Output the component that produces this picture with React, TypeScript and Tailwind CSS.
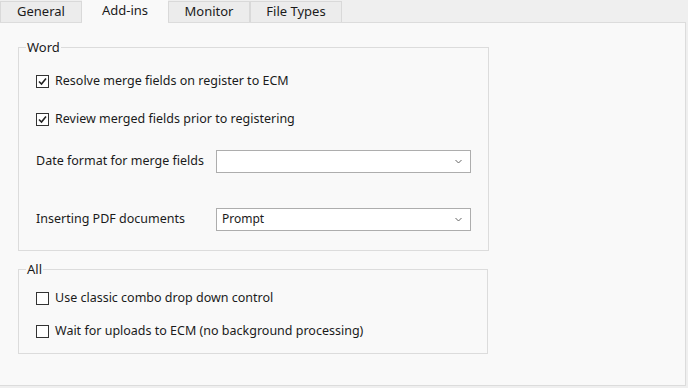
const font = { fontFamily: '"Noto Sans", "Open Sans", sans-serif' };

function Check({ checked, label }: { checked: boolean; label: string }) {
  return (
    <label className="flex items-center gap-[6px] text-[12.5px] text-[#1b1b1b]">
      <span className="flex h-[13px] w-[13px] items-center justify-center border border-[#333] bg-white">
        {checked && (
          <svg width="11" height="11" viewBox="0 0 11 11">
            <path d="M2 5.5 L4.5 8 L9 2.5" fill="none" stroke="#222" strokeWidth="1.6" />
          </svg>
        )}
      </span>
      <span>{label}</span>
    </label>
  );
}

function Combo({ value }: { value?: string }) {
  return (
    <div className="flex h-[23px] w-[255px] items-center justify-between border border-[#adadad] bg-white pl-[5px] pr-[8px] text-[12px] text-[#1b1b1b]">
      <span>{value}</span>
      <svg width="7" height="5" viewBox="0 0 7 5">
        <path d="M0.5 1 L3.5 4 L6.5 1" fill="none" stroke="#666" strokeWidth="1" />
      </svg>
    </div>
  );
}

function Group({ title, children, className }: { title: string; children: React.ReactNode; className: string }) {
  return (
    <fieldset className={`w-[470px] border border-[#dcdcdc] px-[17px] ${className}`}>
      <legend className="ml-[-10px] px-[1px] text-[13px] leading-[14px] text-[#1b1b1b]">{title}</legend>
      {children}
    </fieldset>
  );
}

const tabs = ["General", "Add-ins", "Monitor", "File Types"];

export default function App() {
  return (
    <div className="flex h-[388px] w-[688px] flex-col bg-[#efefef]" style={font}>
      <div className="flex h-[22px] items-end">
        {tabs.map((t, i) =>
          i === 1 ? (
            <div key={t} className="z-10 mb-[-1px] flex h-[23px] w-[86px] items-start justify-center bg-[#f9f9f9] pt-[1px] text-[13px] text-[#1b1b1b]">
              {t}
            </div>
          ) : (
            <div
              key={t}
              className="flex h-[21px] w-[82px] items-center justify-center border border-b-0 border-[#d9d9d9] bg-[#ececec] text-[13px] text-[#1b1b1b] last:w-[92px]"
            >
              {t}
            </div>
          )
        )}
      </div>
      <div className="mr-[2px] flex h-[364px] flex-col border-t border-r border-b border-[#dcdcdc] bg-[#f9f9f9] pl-[18px]">
        <Group title="Word" className="mt-[17px] h-[211px] pt-[18px]">
          <Check checked label="Resolve merge fields on register to ECM" />
          <div className="mt-[19px]">
            <Check checked label="Review merged fields prior to registering" />
          </div>
          <div className="mt-[21px] flex items-center text-[12.5px] text-[#1b1b1b]">
            <span className="w-[180px]">Date format for merge fields</span>
            <Combo />
          </div>
          <div className="mt-[35px] flex items-center text-[12.5px] text-[#1b1b1b]">
            <span className="w-[180px]">Inserting PDF documents</span>
            <Combo value="Prompt" />
          </div>
        </Group>
        <Group title="All" className="mt-[11px] h-[92px] pt-[13px]">
          <Check checked={false} label="Use classic combo drop down control" />
          <div className="mt-[14px]">
            <Check checked={false} label="Wait for uploads to ECM (no background processing)" />
          </div>
        </Group>
      </div>
    </div>
  );
}
